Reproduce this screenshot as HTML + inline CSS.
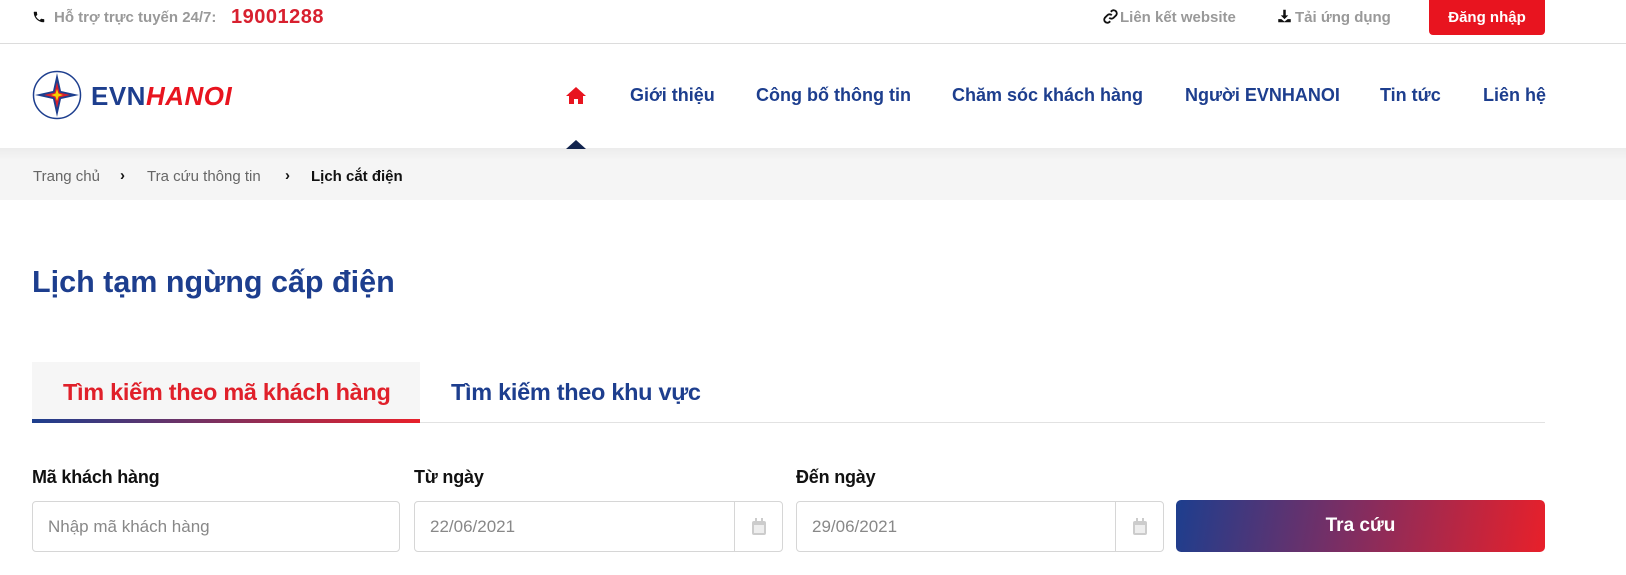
<!DOCTYPE html>
<html><head><meta charset="utf-8"><style>
*{margin:0;padding:0;box-sizing:border-box}
body{width:1626px;height:575px;overflow:hidden;background:#fff;font-family:"Liberation Sans",sans-serif;position:relative}
.a{position:absolute;white-space:nowrap}
.top{left:0;top:0;width:1626px;height:44px;border-bottom:1px solid #dcdcdc}
.g{color:#999;font-weight:bold;font-size:15px}
.nav{color:#1d3e8e;font-weight:bold;font-size:18px;top:85px}
.inp{border:1px solid #d6d6d6;border-radius:4px;height:51px;top:501px;background:#fff}
.ph{color:#888;font-size:17px;top:15px;left:15px}
.cal{position:absolute;right:0;top:0;width:48px;height:49px;border-left:1px solid #d6d6d6}
.lbl{top:467px;font-size:18px;font-weight:bold;color:#111;letter-spacing:-0.2px}
</style></head><body>
<div class="a top"></div>
<svg class="a" style="left:32px;top:10px" width="14" height="14" viewBox="0 0 24 24"><path d="M6.6 10.8a15 15 0 0 0 6.6 6.6l2.2-2.2c.3-.3.7-.4 1-.2 1.1.4 2.3.6 3.6.6.6 0 1 .4 1 1V20c0 .6-.4 1-1 1A17 17 0 0 1 3 4c0-.6.4-1 1-1h3.5c.6 0 1 .4 1 1 0 1.3.2 2.5.6 3.6.1.3 0 .7-.2 1z" fill="#111"/></svg>
<div class="a g" style="left:54px;top:9px">Hỗ trợ trực tuyến 24/7:</div>
<div class="a" style="left:231px;top:6px;color:#d8202f;font-weight:bold;font-size:20px;letter-spacing:0.5px">19001288</div>
<svg class="a" style="left:1103px;top:9px" width="15" height="15" viewBox="0 0 24 24"><path d="M10 14a5 5 0 0 0 7 0l4-4a5 5 0 0 0-7-7l-1.5 1.5M14 10a5 5 0 0 0-7 0l-4 4a5 5 0 0 0 7 7l1.5-1.5" stroke="#111" stroke-width="3" fill="none"/></svg>
<div class="a g" style="left:1120px;top:9px">Liên kết website</div>
<svg class="a" style="left:1277px;top:8px" width="15" height="16" viewBox="0 0 24 24"><path d="M10 2h4v9h4l-6 6-6-6h4zM2 17h5l5 4 5-4h5v5H2z" fill="#111"/></svg>
<div class="a g" style="left:1295px;top:9px">Tải ứng dụng</div>
<div class="a" style="left:1429px;top:0;width:116px;height:35px;background:#e8141f;border-radius:0 0 4px 4px;color:#fff;font-weight:bold;font-size:15px;text-align:center;line-height:35px">Đăng nhập</div>
<svg class="a" style="left:32px;top:70px" width="50" height="50" viewBox="0 0 50 50"><circle cx="25" cy="25" r="23.5" fill="#fff" stroke="#1d3e8e" stroke-width="1.5"/><path d="M25 3L29 21 47 25 29 29 25 47 21 29 3 25 21 21z" fill="#1d3e8e"/><path d="M25 12L27.5 22.5 38 25 27.5 27.5 25 38 22.5 27.5 12 25 22.5 22.5z" fill="#d8202f"/><path d="M25 19L26.5 23.5 31 25 26.5 26.5 25 31 23.5 26.5 19 25 23.5 23.5z" fill="#f5d300"/></svg>
<div class="a" style="left:91px;top:81px;font-size:26px;font-weight:bold;color:#1d3e8e;letter-spacing:0.5px">EVN<span style="color:#e8141f;font-style:italic">HANOI</span></div>
<svg class="a" style="left:565px;top:86px" width="22" height="19" viewBox="0 0 22 19"><path d="M11 1L1 10h3v8h5v-5h4v5h5v-8h3z" fill="#e8141f"/></svg>
<div class="a nav" style="left:630px">Giới thiệu</div>
<div class="a nav" style="left:756px">Công bố thông tin</div>
<div class="a nav" style="left:952px">Chăm sóc khách hàng</div>
<div class="a nav" style="left:1185px">Người EVNHANOI</div>
<div class="a nav" style="left:1380px">Tin tức</div>
<div class="a nav" style="left:1483px">Liên hệ</div>
<div class="a" style="left:0;top:148px;width:1626px;height:52px;background:linear-gradient(#ececec,#f5f5f5 12px)"></div>
<div class="a" style="left:566px;top:140px;width:0;height:0;border-left:10px solid transparent;border-right:10px solid transparent;border-bottom:9px solid #12244e"></div>
<div class="a" style="left:33px;top:168px;font-size:15px;color:#666">Trang chủ</div>
<div class="a" style="left:120px;top:167px;font-size:15px;color:#111;font-weight:bold">›</div>
<div class="a" style="left:147px;top:168px;font-size:15px;color:#666">Tra cứu thông tin</div>
<div class="a" style="left:285px;top:167px;font-size:15px;color:#111;font-weight:bold">›</div>
<div class="a" style="left:311px;top:168px;font-size:15px;color:#111;font-weight:bold">Lịch cắt điện</div>
<div class="a" style="left:32px;top:265px;font-size:30.5px;font-weight:bold;color:#1d3e8e">Lịch tạm ngừng cấp điện</div>
<div class="a" style="left:32px;top:362px;width:388px;height:57px;background:#f6f6f6"></div>
<div class="a" style="left:32px;top:422px;width:1513px;height:1px;background:#e2e2e2"></div>
<div class="a" style="left:32px;top:419px;width:388px;height:4px;background:linear-gradient(90deg,#1d3e8e,#e8202a)"></div>
<div class="a" style="left:63px;top:379px;font-size:23.5px;font-weight:bold;color:#e0202a;letter-spacing:-0.3px">Tìm kiếm theo mã khách hàng</div>
<div class="a" style="left:451px;top:379px;font-size:23.5px;font-weight:bold;color:#1d3e8e;letter-spacing:-0.3px">Tìm kiếm theo khu vực</div>
<div class="a lbl" style="left:32px">Mã khách hàng</div>
<div class="a lbl" style="left:414px">Từ ngày</div>
<div class="a lbl" style="left:796px">Đến ngày</div>
<div class="a inp" style="left:32px;width:368px"><div class="a ph">Nhập mã khách hàng</div></div>
<div class="a inp" style="left:414px;width:369px"><div class="a ph">22/06/2021</div><div class="cal"><svg style="position:absolute;left:17px;top:16px" width="14" height="17" viewBox="0 0 14 17"><rect x="0" y="3" width="14" height="14" rx="2" fill="#ccc"/><rect x="3" y="0" width="2" height="4" fill="#ccc"/><rect x="9" y="0" width="2" height="4" fill="#ccc"/><rect x="2" y="7" width="10" height="8" fill="#eee"/></svg></div></div>
<div class="a inp" style="left:796px;width:368px"><div class="a ph">29/06/2021</div><div class="cal"><svg style="position:absolute;left:17px;top:16px" width="14" height="17" viewBox="0 0 14 17"><rect x="0" y="3" width="14" height="14" rx="2" fill="#ccc"/><rect x="3" y="0" width="2" height="4" fill="#ccc"/><rect x="9" y="0" width="2" height="4" fill="#ccc"/><rect x="2" y="7" width="10" height="8" fill="#eee"/></svg></div></div>
<div class="a" style="left:1176px;top:500px;width:369px;height:52px;border-radius:5px;background:linear-gradient(100deg,#1d3e8e,#7a2e64 45%,#e8202a);color:#fff;font-weight:bold;font-size:19px;text-align:center;line-height:52px">Tra cứu</div>
</body></html>
